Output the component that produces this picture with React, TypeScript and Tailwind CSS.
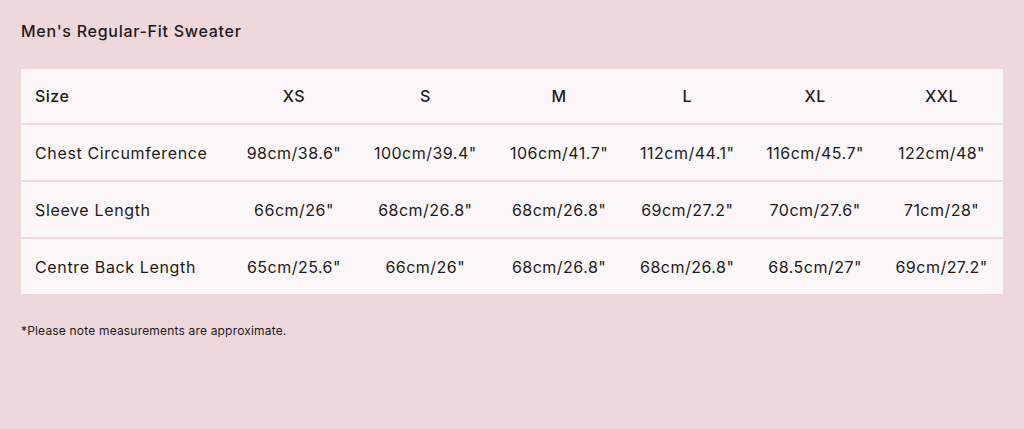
import React from "react"

const sizes = ["XS", "S", "M", "L", "XL", "XXL"]

const rows: { label: string; values: string[] }[] = [
  {
    label: "Chest Circumference",
    values: ["98cm/38.6\"", "100cm/39.4\"", "106cm/41.7\"", "112cm/44.1\"", "116cm/45.7\"", "122cm/48\""],
  },
  {
    label: "Sleeve Length",
    values: ["66cm/26\"", "68cm/26.8\"", "68cm/26.8\"", "69cm/27.2\"", "70cm/27.6\"", "71cm/28\""],
  },
  {
    label: "Centre Back Length",
    values: ["65cm/25.6\"", "66cm/26\"", "68cm/26.8\"", "68cm/26.8\"", "68.5cm/27\"", "69cm/27.2\""],
  },
]

const App: React.FC = () => (
  <div className="min-h-[429px] bg-[#efd8dc] px-[21px] pt-[21px] text-[#1c1a1b] font-['Inter',sans-serif] tracking-[0.03em]">
    <h2 className="text-[16px] font-medium leading-5 tracking-[0.045em]">Men's Regular-Fit Sweater</h2>
    <table className="mt-[28px] w-full border-collapse bg-[#fbf6f7] text-[16px]">
      <thead>
        <tr className="h-[55px] border-b-2 border-[#efd8dc]">
          <th className="pl-[14px] text-left font-medium w-[210px]">Size</th>
          {sizes.map((s) => (
            <th key={s} className="text-center font-medium">
              {s}
            </th>
          ))}
        </tr>
      </thead>
      <tbody>
        {rows.map((r, i) => (
          <tr key={r.label} className={i < rows.length - 1 ? "h-[57px] border-b-2 border-[#efd8dc]" : "h-[56px]"}>
            <td className="pl-[14px] text-left tracking-[0.04em]">{r.label}</td>
            {r.values.map((v, j) => (
              <td key={j} className="text-center">
                {v}
              </td>
            ))}
          </tr>
        ))}
      </tbody>
    </table>
    <p className="mt-[28px] text-[12px] tracking-[0.015em]">*Please note measurements are approximate.</p>
  </div>
)

export default App
